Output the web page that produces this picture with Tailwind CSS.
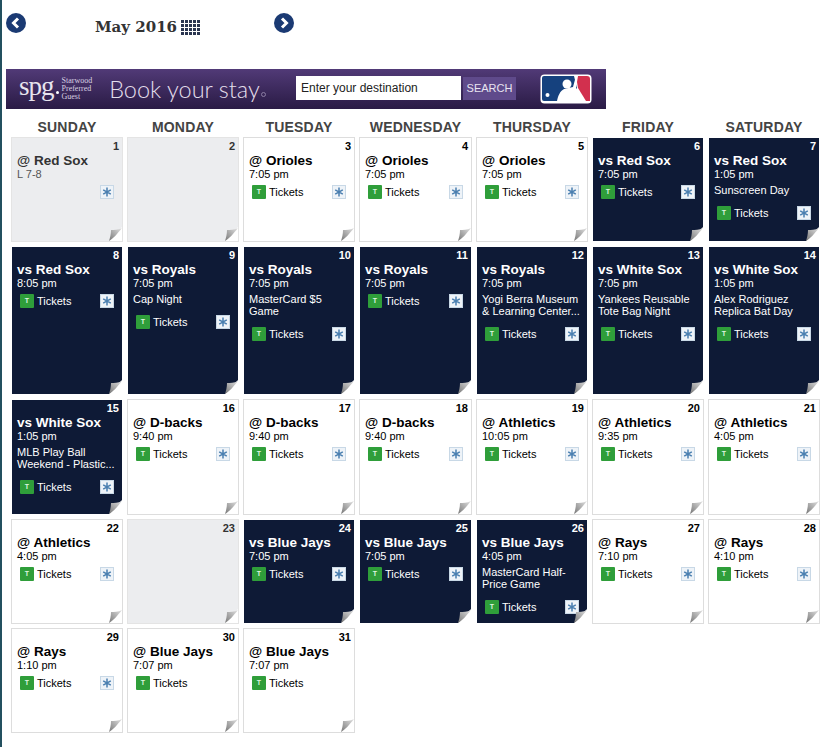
<!DOCTYPE html>
<html lang="en">
<head>
<meta charset="UTF-8">
<title>May 2016</title>
<script src="https://cdn.jsdelivr.net/npm/@tailwindcss/browser@4"></script>
</head>
<body class="bg-white font-['Liberation_Sans',Arial,sans-serif] w-[825px] h-[747px] overflow-hidden">
<div class="border-l-2 border-[#23505f] h-full">

  <!-- month nav -->
  <div class="relative h-[69px]">
    <svg class="absolute left-[4px] top-[13px]" width="20" height="20" viewBox="0 0 20 20"><circle cx="10" cy="10" r="10" fill="#1b3a73"/><path d="M12 5.500 7.500 10l4.500 4.500" fill="none" stroke="#fff" stroke-width="3"/></svg>
    <svg class="absolute left-[272px] top-[13px]" width="20" height="20" viewBox="0 0 20 20"><circle cx="10" cy="10" r="10" fill="#1b3a73"/><path d="M8 5.500 12.500 10 8 14.500" fill="none" stroke="#fff" stroke-width="3"/></svg>
    <div class="absolute left-[93px] top-[16px] flex items-center gap-[4px]">
      <span class="font-['DejaVu_Serif',serif] font-bold text-[15px] leading-[22px] text-[#333]">May 2016</span>
      <span class="grid grid-cols-5 gap-px w-[19px]">
        <i class="size-[3px] bg-[#2a3550]"></i><i class="size-[3px] bg-[#2a3550]"></i><i class="size-[3px] bg-[#2a3550]"></i><i class="size-[3px] bg-[#2a3550]"></i><i class="size-[3px] bg-[#2a3550]"></i>
        <i class="size-[3px] bg-[#2a3550]"></i><i class="size-[3px] bg-[#2a3550]"></i><i class="size-[3px] bg-[#2a3550]"></i><i class="size-[3px] bg-[#2a3550]"></i><i class="size-[3px] bg-[#2a3550]"></i>
        <i class="size-[3px] bg-[#2a3550]"></i><i class="size-[3px] bg-[#2a3550]"></i><i class="size-[3px] bg-[#2a3550]"></i><i class="size-[3px] bg-[#2a3550]"></i><i class="size-[3px] bg-[#2a3550]"></i>
        <i class="size-[3px] bg-[#2a3550]"></i><i class="size-[3px] bg-[#2a3550]"></i><i class="size-[3px] bg-[#2a3550]"></i><i class="size-[3px] bg-[#2a3550]"></i><i class="size-[3px] bg-[#2a3550]"></i>
      </span>
    </div>
  </div>

  <!-- spg banner -->
  <div class="ml-[4px] w-[600px] h-[40px] bg-gradient-to-b from-[#513a77] to-[#2a1b45] flex items-center text-white">
    <div class="w-[290px] shrink-0 flex items-center">
      <span class="ml-[13px] font-['Liberation_Serif',serif] text-[27px] leading-[28px] tracking-[-1px] text-[#e8e4ee] -mt-[6px]">spg</span>
      <span class="ml-[2px] size-[3px] rounded-full bg-white mt-[6px]"></span>
      <span class="ml-[3px] font-['Liberation_Serif',serif] text-[8px] leading-[8px] text-[#d8d2e2]">Starwood<br>Preferred<br>Guest</span>
      <span class="ml-[17px] font-['Lato',sans-serif] font-light text-[23.500px] leading-[30px] text-[#e4dfec]">Book your stay</span>
      <span class="ml-[1px] mt-[10px] size-[5px] rounded-full border border-[#8b7da3]"></span>
    </div>
    <div class="w-[165px] h-[24px] -mt-[2px] bg-white text-[12px] leading-[24px] pl-[5px] text-[#222]">Enter your destination</div>
    <div class="ml-[2px] w-[53px] h-[23px] -mt-[1px] bg-[#5f4a8b] text-[11px] leading-[23px] text-center text-[#e8e4f0]">SEARCH</div>
    <svg class="ml-[24px] -mt-[1px]" width="52" height="30" viewBox="0 0 52 30">
      <rect x="0.500" y="0.500" width="51" height="29" rx="4" fill="#fff"/>
      <path d="M4 2H34L37 14 30 27H4a2 2 0 0 1-2-2V4a2 2 0 0 1 2-2z" fill="#15417e"/>
      <path d="M36 2H47a3 3 0 0 1 3 3V27H46L38 14z" fill="#d2304e"/>
      <circle cx="7.500" cy="21" r="2" fill="#fff"/>
      <circle cx="27" cy="10" r="4.500" fill="#fff"/>
      <path d="M17 27C18 22 20 17 24 15L33 13 36 2 38 2 36 14 40 20 45 27z" fill="#fff"/>
    </svg>
  </div>

  <!-- weekdays -->
  <div class="ml-[9px] mt-[9px] grid grid-cols-[112px_112px_112px_113px_112px_112px_112px] gap-x-[4px] text-[14px] leading-[18px] font-bold tracking-[0.200px] text-[#444] text-center">
    <div>SUNDAY</div><div>MONDAY</div><div>TUESDAY</div><div>WEDNESDAY</div><div>THURSDAY</div><div>FRIDAY</div><div>SATURDAY</div>
  </div>

  <!-- days -->
  <div id="cal" class="ml-[9px] mt-[1px] grid grid-cols-[112px_112px_112px_113px_112px_112px_112px] grid-rows-[105px_149px_116px_105px_105px] gap-x-[4px] gap-y-[4px]"></div>
</div>

<script>
  // home = navy, away = white, past = grey
  var H = 'bg-[#0e1a36] border border-white text-white', A = 'bg-white border border-[#ddd] text-black', P = 'bg-[#ecedef] border border-[#e4e4e4] text-[#333]';
  var games = [
    [P,'@ Red Sox','L 7-8','',0],[P],
    [A,'@ Orioles','7:05 pm'],[A,'@ Orioles','7:05 pm'],[A,'@ Orioles','7:05 pm'],
    [H,'vs Red Sox','7:05 pm'],[H,'vs Red Sox','1:05 pm','Sunscreen Day'],
    [H,'vs Red Sox','8:05 pm'],[H,'vs Royals','7:05 pm','Cap Night'],[H,'vs Royals','7:05 pm','MasterCard $5 Game'],[H,'vs Royals','7:05 pm'],
    [H,'vs Royals','7:05 pm','Yogi Berra Museum &amp; Learning Center...'],[H,'vs White Sox','7:05 pm','Yankees Reusable Tote Bag Night'],[H,'vs White Sox','1:05 pm','Alex Rodriguez Replica Bat Day'],
    [H,'vs White Sox','1:05 pm','MLB Play Ball Weekend - Plastic...'],[A,'@ D-backs','9:40 pm'],[A,'@ D-backs','9:40 pm'],[A,'@ D-backs','9:40 pm'],
    [A,'@ Athletics','10:05 pm'],[A,'@ Athletics','9:35 pm'],[A,'@ Athletics','4:05 pm'],
    [A,'@ Athletics','4:05 pm'],[P],[H,'vs Blue Jays','7:05 pm'],[H,'vs Blue Jays','7:05 pm'],
    [H,'vs Blue Jays','4:05 pm','MasterCard Half-Price Game'],[A,'@ Rays','7:10 pm'],[A,'@ Rays','4:10 pm'],
    [A,'@ Rays','1:10 pm'],[A,'@ Blue Jays','7:07 pm','',1],[A,'@ Blue Jays','7:07 pm','',1]
  ];

  var star = '<span class="size-[14px] bg-[#eef3f8] border border-[#c8d8e6] flex items-center justify-center"><svg width="10" height="10" viewBox="0 0 10 10" stroke="#4a7fb0" stroke-width="1.500"><path d="M5 .5v9M1.200 2.800 8.800 7.200M8.800 2.800 1.200 7.200"/></svg></span>';
  var curl = '<svg class="absolute right-0 bottom-0" width="13" height="14" viewBox="0 0 13 14"><defs><linearGradient id="fold" x1="0" y1="1" x2="1" y2="0"><stop offset="0" stop-color="#777"/><stop offset="1" stop-color="#e2e2e2"/></linearGradient></defs><path d="M13 0v14H0z" fill="#fff"/><path d="M13 1C9 3 5 3 2 3 2 7 1 11 0 14 4 12 9 6 13 1z" fill="url(#fold)"/></svg>';

  var html = '';
  games.forEach(function (g, i) {
    html += '<div class="relative overflow-hidden pl-[5px] pr-[3px] ' + g[0] + '">';
    html += '<div class="absolute right-[3px] top-[2px] text-[11px] leading-[13px] font-bold">' + (i + 1) + '</div>';
    if (g[1]) {
      html += '<div class="mt-[15px] text-[13.500px] leading-[15px] font-bold whitespace-nowrap">' + g[1] + '</div>';
      html += '<div class="text-[11px] leading-[12px]' + (g[0] == P ? ' text-[#555]' : '') + '">' + g[2] + '</div>';
      if (g[3]) html += '<div class="mt-[4px] text-[11px] leading-[12px]">' + g[3] + '</div>';
      html += '<div class="' + (g[3] ? 'mt-[10px]' : 'mt-[5px]') + ' flex items-center h-[14px] pr-[5px]">';
      if (g[0] != P) html += '<span class="ml-[3px] size-[14px] rounded-[1px] bg-[#2f9e3a] text-[#dff5e0] text-[7px] leading-[14px] font-bold text-center">T</span><span class="ml-[3px] text-[11px]">Tickets</span>';
      if (!g[4]) html += '<span class="ml-auto">' + star + '</span>';
      html += '</div>';
    }
    html += curl + '</div>';
  });
  document.getElementById('cal').innerHTML = html;
</script>
</body>
</html>
